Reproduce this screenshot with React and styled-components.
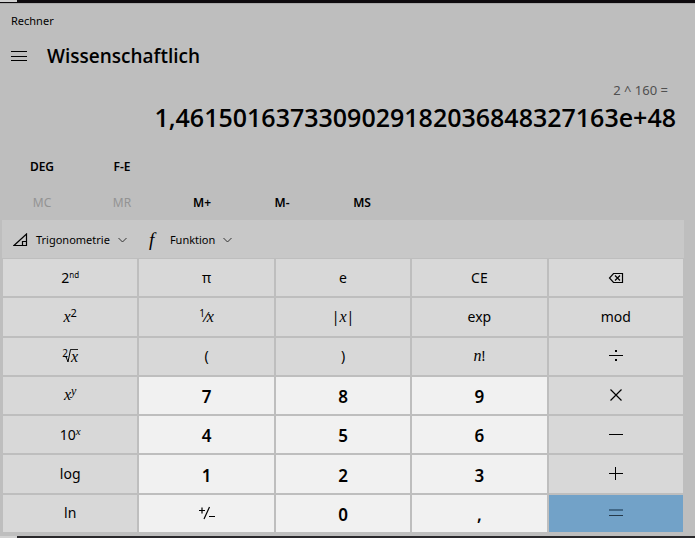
import React from 'react';
import styled, { createGlobalStyle, css } from 'styled-components';

const sans = '"Noto Sans", "Open Sans", sans-serif';
const heading = '"Open Sans", "Noto Sans", sans-serif';
const serif = '"Liberation Serif", serif';

const GlobalStyle = createGlobalStyle`
  *, *::before, *::after { box-sizing: border-box; }
  body { margin: 0; background: #100d10; color: #000; font-family: ${sans}; }
  button { font: inherit; color: inherit; margin: 0; padding: 0; border: 0; background: none; }
  svg { display: block; }
`;

const Desktop = styled.div`
  min-height: 100vh;
  display: flex;
  flex-direction: column;
`;

const Backdrop = styled.div`
  flex: none;
  display: flex;
  height: ${({ $height }) => $height}px;
  background: ${({ $color }) => $color};
`;

const WindowEdge = styled.div`
  width: ${({ $width }) => $width}px;
  height: 2px;
  background: #d2d2d2;
`;

const Window = styled.main`
  flex: 1;
  display: flex;
  flex-direction: column;
  background: #bebebe;
  border-top: 1px solid #aaa;
  padding-bottom: 4px;
`;

const TitleBar = styled.header`
  height: 32px;
  padding: 0 11px;
  font-size: 11px;
  line-height: 34px;
`;

const ModeBar = styled.div`
  display: flex;
  align-items: center;
  gap: 20px;
  height: 40px;
  padding: 0 11px;
`;

const MenuButton = styled.button`
  display: flex;
  align-items: center;
  width: 16px;
  height: 24px;
`;

const ModeTitle = styled.h1`
  margin: 0;
  font-family: ${heading};
  font-size: 19px;
  line-height: 28px;
  font-weight: 600;
`;

const Display = styled.section`
  display: flex;
  flex-direction: column;
  align-items: flex-end;
  padding: 4px 19px 0 8px;
`;

const Expression = styled.div`
  padding-right: 8px;
  font-size: 13px;
  line-height: 20px;
  color: #505050;
`;

const Result = styled.output`
  font-family: ${heading};
  font-size: 25px;
  line-height: 34px;
  font-weight: 600;
  white-space: nowrap;
`;

const SmallRow = styled.div`
  display: grid;
  grid-template-columns: repeat(5, minmax(0, 80px));
  height: 36px;
  margin: ${({ $first }) => ($first ? '14px' : '0')} 2px 0;
`;

const SmallButton = styled.button`
  && {
    font-size: 12px;
    font-weight: 600;
    &:disabled { color: #939393; font-weight: 400; }
  }
`;

const FunctionBar = styled.nav`
  display: flex;
  align-items: center;
  height: 38px;
  margin: 0 11px 0 2px;
  padding: 2px 11px 0;
  gap: 22px;
  background: #c8c8c8;
`;

const DropButton = styled.button`
  && {
    display: flex;
    align-items: center;
    gap: 8px;
    font-size: 11px;
    line-height: 20px;
  }
`;

const ScriptF = styled.span`
  width: 13px;
  font: italic 19px/20px ${serif};
  text-align: left;
`;

const Keypad = styled.div`
  flex: 1;
  display: grid;
  grid-template-columns: repeat(5, minmax(0, 1fr));
  grid-template-rows: repeat(7, minmax(36px, 1fr));
  gap: 2px;
  margin: 1px 12px 0 3px;
`;

const keyKinds = {
  op: css`background: #d8d8d8; font-size: 14px;`,
  sign: css`background: #f1f1f1; font-size: 14px;`,
  digit: css`background: #f1f1f1; font-size: 17px; font-weight: 600; padding-top: 3px;`,
  equals: css`background: #72a2c8; color: #25394a;`,
};

const Key = styled.button`
  && {
    display: flex;
    align-items: center;
    justify-content: center;
    line-height: 24px;
    ${({ $kind }) => keyKinds[$kind]}
  }
`;

const Formula = styled.span`
  white-space: nowrap;
  line-height: 20px;
`;

const Variable = styled.i`
  font-family: ${serif};
  font-size: 16px;
  line-height: 16px;
`;

const Raised = styled.sup`
  font-size: ${({ $size = 10 }) => $size}px;
  line-height: 0;
  vertical-align: 5px;
  ${({ $italic }) => $italic && css`font-family: ${serif}; font-style: italic;`}
`;

const Radicand = styled(Variable)`
  border-top: 1px solid #222;
  height: 14px;
  line-height: 14px;
`;

const Root = styled.span`
  display: flex;
  align-items: center;
`;

const RootIndex = styled.span`
  align-self: flex-start;
  margin-right: -3px;
  font-size: 10px;
  line-height: 8px;
`;

const Icon = ({ w = 16, h = 16, sw = 1, children }) => (
  <svg width={w} height={h} viewBox={`0 0 ${w} ${h}`} fill="none" stroke="currentColor" strokeWidth={sw} aria-hidden="true">
    {children}
  </svg>
);

const Chevron = () => <Icon w={9} h={6}><path d="M.5 1 4.5 5l4-4" stroke="#333" /></Icon>;

const keys = [
  ['2nd', 'op', <Formula>2<Raised $size={8}>nd</Raised></Formula>],
  ['Pi', 'op', 'π'],
  ['e', 'op', 'e'],
  ['CE', 'op', 'CE'],
  ['Rücktaste', 'op', <Icon><path d="M5.5 3.5h9v9h-9L1.5 8z" strokeWidth="1.2" /><path d="m7 5.5 5 5m0-5-5 5" strokeWidth="1.2" /></Icon>],
  ['Quadrat', 'op', <Formula><Variable>x</Variable><Raised $size={11}>2</Raised></Formula>],
  ['Kehrwert', 'op', <Formula><Raised>1</Raised>⁄<Variable>x</Variable></Formula>],
  ['Betrag', 'op', <Formula>|<Variable>x</Variable>|</Formula>],
  ['exp', 'op', 'exp'],
  ['mod', 'op', 'mod'],
  ['Quadratwurzel', 'op', <Root><RootIndex>2</RootIndex><Icon w={6} h={14}><path d="m0 8 1-.5L3 13 5.5.5H6" /></Icon><Radicand>x</Radicand></Root>],
  ['Klammer auf', 'op', '('],
  ['Klammer zu', 'op', ')'],
  ['Fakultät', 'op', <Formula><Variable>n</Variable>!</Formula>],
  ['Geteilt durch', 'op', <Icon><path d="M1 7.5h14" /><path d="M7 3h2M7 12h2" strokeWidth="2" /></Icon>],
  ['Potenz', 'op', <Formula><Variable>x</Variable><Raised $size={12} $italic>y</Raised></Formula>],
  ['7', 'digit', '7'],
  ['8', 'digit', '8'],
  ['9', 'digit', '9'],
  ['Mal', 'op', <Icon><path d="m2.5 2.5 11 11m0-11-11 11" strokeWidth="1.2" /></Icon>],
  ['Zehnerpotenz', 'op', <Formula>10<Raised $size={11} $italic>x</Raised></Formula>],
  ['4', 'digit', '4'],
  ['5', 'digit', '5'],
  ['6', 'digit', '6'],
  ['Minus', 'op', <Icon><path d="M1 7.5h14" /></Icon>],
  ['log', 'op', 'log'],
  ['1', 'digit', '1'],
  ['2', 'digit', '2'],
  ['3', 'digit', '3'],
  ['Plus', 'op', <Icon><path d="M1 7.5h14M7.5 1v13" /></Icon>],
  ['ln', 'op', 'ln'],
  ['Vorzeichen', 'sign', <Icon w={18}><path d="M1 5.5h6M4 2.5v6M11.5 2 6 14M11 11.5h6" strokeWidth="1.2" /></Icon>],
  ['0', 'digit', '0'],
  ['Komma', 'digit', ','],
  ['Gleich', 'equals', <Icon><path d="M1 5h14" strokeWidth="2" stroke="#426887" /><path d="M1 10.5h14" /></Icon>],
];

export default function App() {
  return (
    <Desktop>
      <GlobalStyle />
      <Backdrop $height={3} $color="#0e0b0e"><WindowEdge $width={17} /></Backdrop>
      <Window>
        <TitleBar>Rechner</TitleBar>
        <ModeBar>
          <MenuButton aria-label="Navigation öffnen">
            <Icon><path d="M0 3.5h16M0 8.5h16M0 12.5h16" /></Icon>
          </MenuButton>
          <ModeTitle>Wissenschaftlich</ModeTitle>
        </ModeBar>
        <Display>
          <Expression>2 ^ 160 =</Expression>
          <Result>1,4615016373309029182036848327163e+48</Result>
        </Display>
        <SmallRow $first>
          <SmallButton>DEG</SmallButton>
          <SmallButton>F-E</SmallButton>
        </SmallRow>
        <SmallRow>
          <SmallButton disabled>MC</SmallButton>
          <SmallButton disabled>MR</SmallButton>
          <SmallButton>M+</SmallButton>
          <SmallButton>M-</SmallButton>
          <SmallButton>MS</SmallButton>
        </SmallRow>
        <FunctionBar>
          <DropButton>
            <Icon w={15} h={14}><path d="M1 12.5h12.5V1zM9.5 12.5v-4h4" strokeWidth="1.2" /></Icon>
            Trigonometrie
            <Chevron />
          </DropButton>
          <DropButton>
            <ScriptF>f</ScriptF>
            Funktion
            <Chevron />
          </DropButton>
        </FunctionBar>
        <Keypad>
          {keys.map(([label, kind, face]) => (
            <Key key={label} $kind={kind} aria-label={label}>{face}</Key>
          ))}
        </Keypad>
      </Window>
      <Backdrop $height={2} $color="#29282b"><WindowEdge $width={17} /></Backdrop>
    </Desktop>
  );
}
